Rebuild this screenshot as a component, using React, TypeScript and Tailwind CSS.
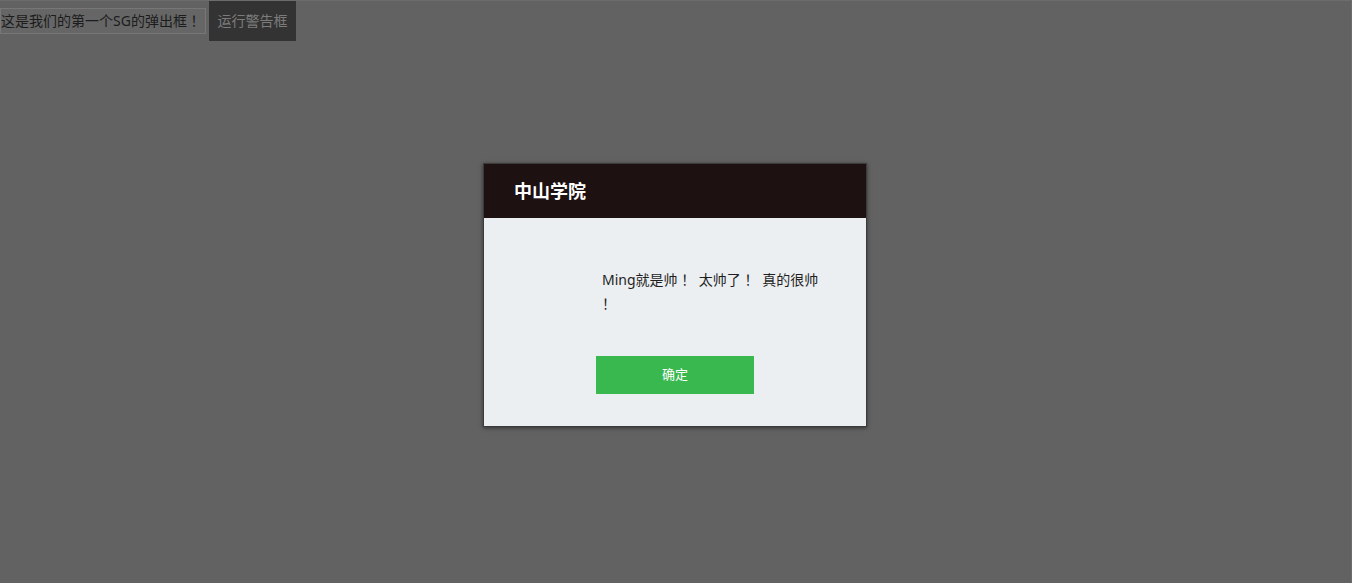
import React from 'react';

const FONT = '"Noto Sans", "Noto Sans CJK SC", sans-serif';

export default function App() {
  return (
    <div
      className="relative h-[583px] w-full overflow-hidden bg-[#626262] border-t border-r border-[#6c6c6c]"
      style={{ fontFamily: FONT }}
    >
      {/* 页面内容（被遮罩压暗） */}
      <div className="flex items-start">
        <div className="mt-[7px] h-[26px] w-[206px] overflow-hidden whitespace-nowrap border border-[#777] bg-[#666666] text-[14px] leading-[24px] text-[#1c1c1c]">
          这是我们的第一个SG的弹出框 ！
        </div>
        <button
          type="button"
          className="-mt-px ml-[3px] h-[41px] w-[87px] bg-[#333333] text-[14px] text-[#7c7c7c]"
        >
          运行警告框
        </button>
      </div>

      {/* 弹出框 */}
      <div className="absolute inset-0 flex items-start pl-[483px] pt-[162px]">
        <div className="flex h-[264px] w-[384px] flex-col border border-[#3b3b3b] shadow-[0_1px_4px_rgba(0,0,0,0.5)]">
          <div className="flex h-[54px] items-center bg-[#1d1111] pl-[30px] text-[18px] font-bold text-white">
            中山学院
          </div>
          <div className="flex flex-1 flex-col bg-[#eceff1]">
            <p className="ml-[118px] mt-[50px] w-[222px] text-[14px] leading-[24px] text-[#1f1f1f]">
              Ming就是帅 ！ 太帅了 ！ 真的很帅 ！
            </p>
            <button
              type="button"
              className="ml-[112px] mt-[40px] h-[38px] w-[158px] bg-[#3ab850] text-[13px] text-white"
            >
              确定
            </button>
          </div>
        </div>
      </div>
    </div>
  );
}
